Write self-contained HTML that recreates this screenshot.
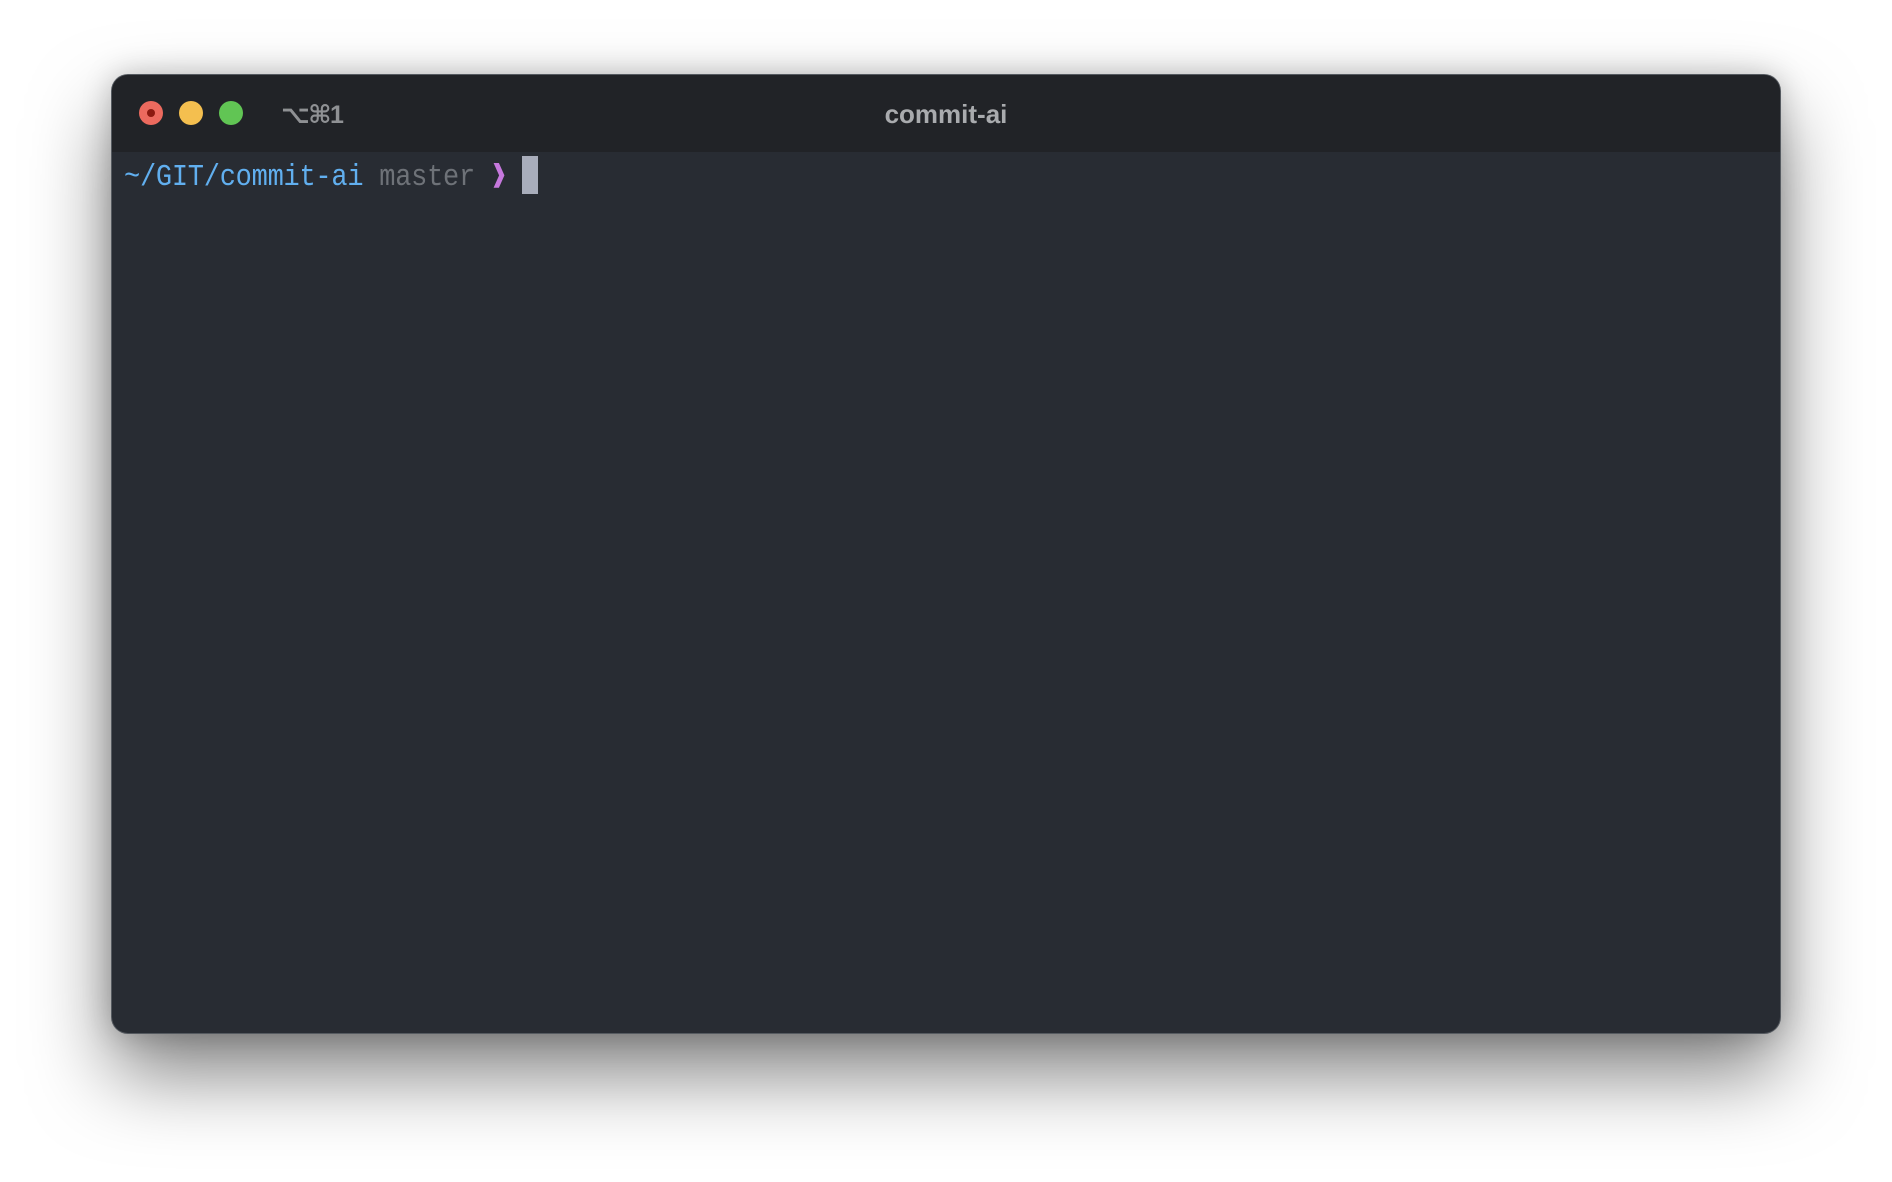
<!DOCTYPE html>
<html><head><style>
html,body{margin:0;padding:0;width:1892px;height:1182px;background:#fff;overflow:hidden}
.win{position:absolute;left:112px;top:75px;width:1668px;height:958px;border-radius:16px;background:#282c33;box-shadow:0 0 0 1px #555a60,0 40px 80px rgba(0,0,0,.5),0 0 30px rgba(0,0,0,.22);overflow:hidden}
.tb{position:absolute;left:0;top:0;right:0;height:77px;background:#212327}
.dot{position:absolute;top:26px;width:24px;height:24px;border-radius:50%}
.t{position:absolute;left:0;right:0;top:24px;text-align:center;font:bold 26px "Liberation Sans",sans-serif;color:#a9abae}
.k{position:absolute;left:169px;top:25px;font:bold 25px "Liberation Sans","DejaVu Sans",sans-serif;letter-spacing:-1.5px;color:#8f9194}
.p{position:absolute;left:12px;top:83px;font:27px "Liberation Mono",monospace;letter-spacing:-0.25px;white-space:pre;transform:scaleY(1.12);transform-origin:left top}
.cur{position:absolute;left:410px;top:81px;width:16px;height:38px;background:#a8adbb}
</style></head><body>
<div class="win">
<div class="tb">
<div class="dot" style="left:27px;background:#ec6a5e"><div style="position:absolute;left:8px;top:8px;width:8px;height:8px;border-radius:50%;background:#8c1a10"></div></div>
<div class="dot" style="left:67px;background:#f4bf4f"></div>
<div class="dot" style="left:107px;background:#61c554"></div>
<div class="k">⌥⌘1</div>
<div class="t">commit-ai</div>
</div>
<div class="p"><span style="color:#61afef">~/GIT/commit-ai</span> <span style="color:#6e7278">master</span> <span style="color:#c678dd">❱</span></div>
<div class="cur"></div>
</div>
</body></html>
